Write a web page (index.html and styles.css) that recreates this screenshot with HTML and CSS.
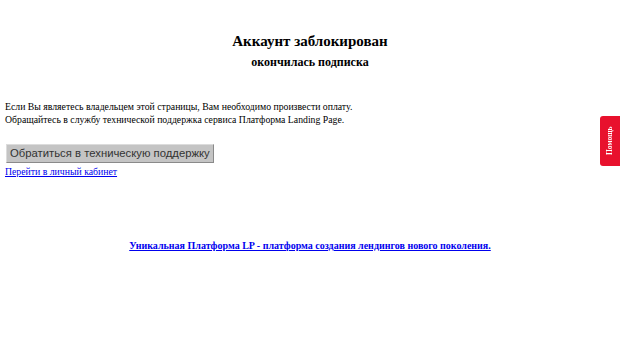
FILE: index.html
```html
<!DOCTYPE html>
<html>
<head>
<meta charset="utf-8" />
<title>Аккаунт заблокирован</title>
<link rel="stylesheet" href="styles.css">
</head>
<body>
<div class="head">
	<h1>Аккаунт заблокирован</h1>
	<h2>окончилась подписка</h2>
</div>
<p class="msg">Если Вы являетесь владельцем этой страницы, Вам необходимо произвести оплату.<br>
Обращайтесь в службу технической поддержка сервиса Платформа Landing Page.</p>
<div class="actions">
	<button class="btn" type="button">Обратиться в техническую поддержку</button>
	<a class="cabinet" href="#">Перейти в личный кабинет</a>
</div>
<p class="foot"><a href="#">Уникальная Платформа LP - платформа создания лендингов нового поколения.</a></p>
<a class="help_tab" href="#">Помощь</a>
</body>
</html>
```

FILE: styles.css
```css
html,body{margin:0;padding:0;background:#fff;}
body{padding:0 5px;font:9.75px/13px "Liberation Serif","Times New Roman",serif;color:#000;}
h1,h2,p{margin:0;padding:0;}
.head{padding-top:32px;text-align:center;}
h1{font-size:15px;line-height:18px;font-weight:bold;}
h2{margin-top:5px;font-size:12px;line-height:14px;font-weight:bold;}
.msg{margin-top:31px;}
.actions{margin-top:18px;}
.btn{display:block;margin:0 0 0 1px;padding:0 3px;height:19px;font:11.3px/17px "Liberation Sans",Arial,sans-serif;color:#333;background:#c4c4c4;border:1px solid #8a8a8a;border-top-color:#dcdcdc;border-left-color:#dcdcdc;}
.cabinet{display:block;margin-top:2px;color:#00e;}
.foot{margin-top:61px;text-align:center;font-weight:bold;font-size:10px;}
.foot a{color:#00e;}
.help_tab{position:fixed;right:0;top:116px;width:20px;height:50px;background:#e8112d;color:#fff;text-decoration:none;font:bold 7.5px/20px "Liberation Serif",serif;writing-mode:vertical-rl;transform:rotate(180deg);text-align:center;border-radius:0 3px 3px 0;}
```
